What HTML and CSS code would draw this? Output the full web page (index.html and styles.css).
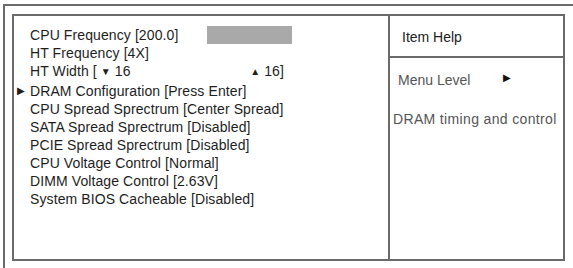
FILE: index.html
```html
<!DOCTYPE html>
<html>
<head>
<meta charset="utf-8">
<link rel="stylesheet" href="styles.css">
</head>
<body>
<div class="frame">
  <div class="panel">
    <div class="main">
      <div class="row first"><span class="label">CPU Frequency [200.0]</span><span class="bar"></span></div>
      <div class="row">HT Frequency [4X]</div>
      <div class="row width"><span>HT Width [ <span class="tri">&#9660;</span> 16</span><span class="upper"><span class="tri">&#9650;</span> 16]</span></div>
      <div class="row sel"><span class="ptr">&#9654;</span>DRAM Configuration [Press Enter]</div>
      <div class="row">CPU Spread Sprectrum [Center Spread]</div>
      <div class="row">SATA Spread Sprectrum [Disabled]</div>
      <div class="row">PCIE Spread Sprectrum [Disabled]</div>
      <div class="row">CPU Voltage Control [Normal]</div>
      <div class="row">DIMM Voltage Control [2.63V]</div>
      <div class="row">System BIOS Cacheable [Disabled]</div>
    </div>
    <div class="help">
      <div class="help-title">Item Help</div>
      <div class="help-body">
        <div class="level"><span>Menu Level</span><span class="lvl-tri">&#9654;</span></div>
        <div class="desc">DRAM timing and control</div>
      </div>
    </div>
  </div>
</div>
</body>
</html>
```
FILE: styles.css
```css
html, body {
  margin: 0;
  padding: 0;
  background: #ffffff;
}
body {
  width: 573px;
  height: 268px;
  overflow: hidden;
  font-family: "Liberation Sans", Arial, sans-serif;
  color: #1e1e1e;
}
.frame {
  margin: 4px 0 0 3px;
  border-top: 2px solid #6a6a6a;
  border-left: 2px solid #6a6a6a;
  padding: 8px 0 0 7px;
  height: 254px;
}
.panel {
  width: 549px;
  height: 243px;
  border: 2px solid #6a6a6a;
  display: grid;
  grid-template-columns: 376px 1fr;
}
.main {
  border-right: 2px solid #6a6a6a;
  padding: 10px 0 0 16px;
  font-size: 14px;
  letter-spacing: 0.1px;
  display: flex;
  flex-direction: column;
}
.row {
  height: 18px;
  line-height: 18px;
  white-space: nowrap;
  position: relative;
  display: flex;
  align-items: center;
}
.label {
  width: 177px;
}
.bar {
  display: inline-block;
  width: 85px;
  height: 18px;
  background: #a9a9a9;
}
.width {
  width: 254px;
  justify-content: space-between;
}
.tri {
  font-size: 10px;
  vertical-align: 1px;
}
.sel {
  margin-top: 2px;
}
.ptr {
  position: absolute;
  left: -13px;
  font-size: 10px;
}
.help {
  display: flex;
  flex-direction: column;
  color: #555;
}
.help-title {
  height: 42px;
  border-bottom: 2px solid #6a6a6a;
  box-sizing: border-box;
  padding: 13px 0 0 12px;
  font-size: 14px;
  color: #222;
}
.help-body {
  padding: 0 0 0 3px;
  font-size: 14px;
}
.level {
  display: flex;
  padding: 13px 0 0 5px;
  height: 18px;
  line-height: 18px;
}
.lvl-tri {
  font-size: 10px;
  color: #111;
  margin-left: 33px;
  margin-top: -2px;
}
.desc {
  margin-top: 22px;
  letter-spacing: 0.35px;
}
```
